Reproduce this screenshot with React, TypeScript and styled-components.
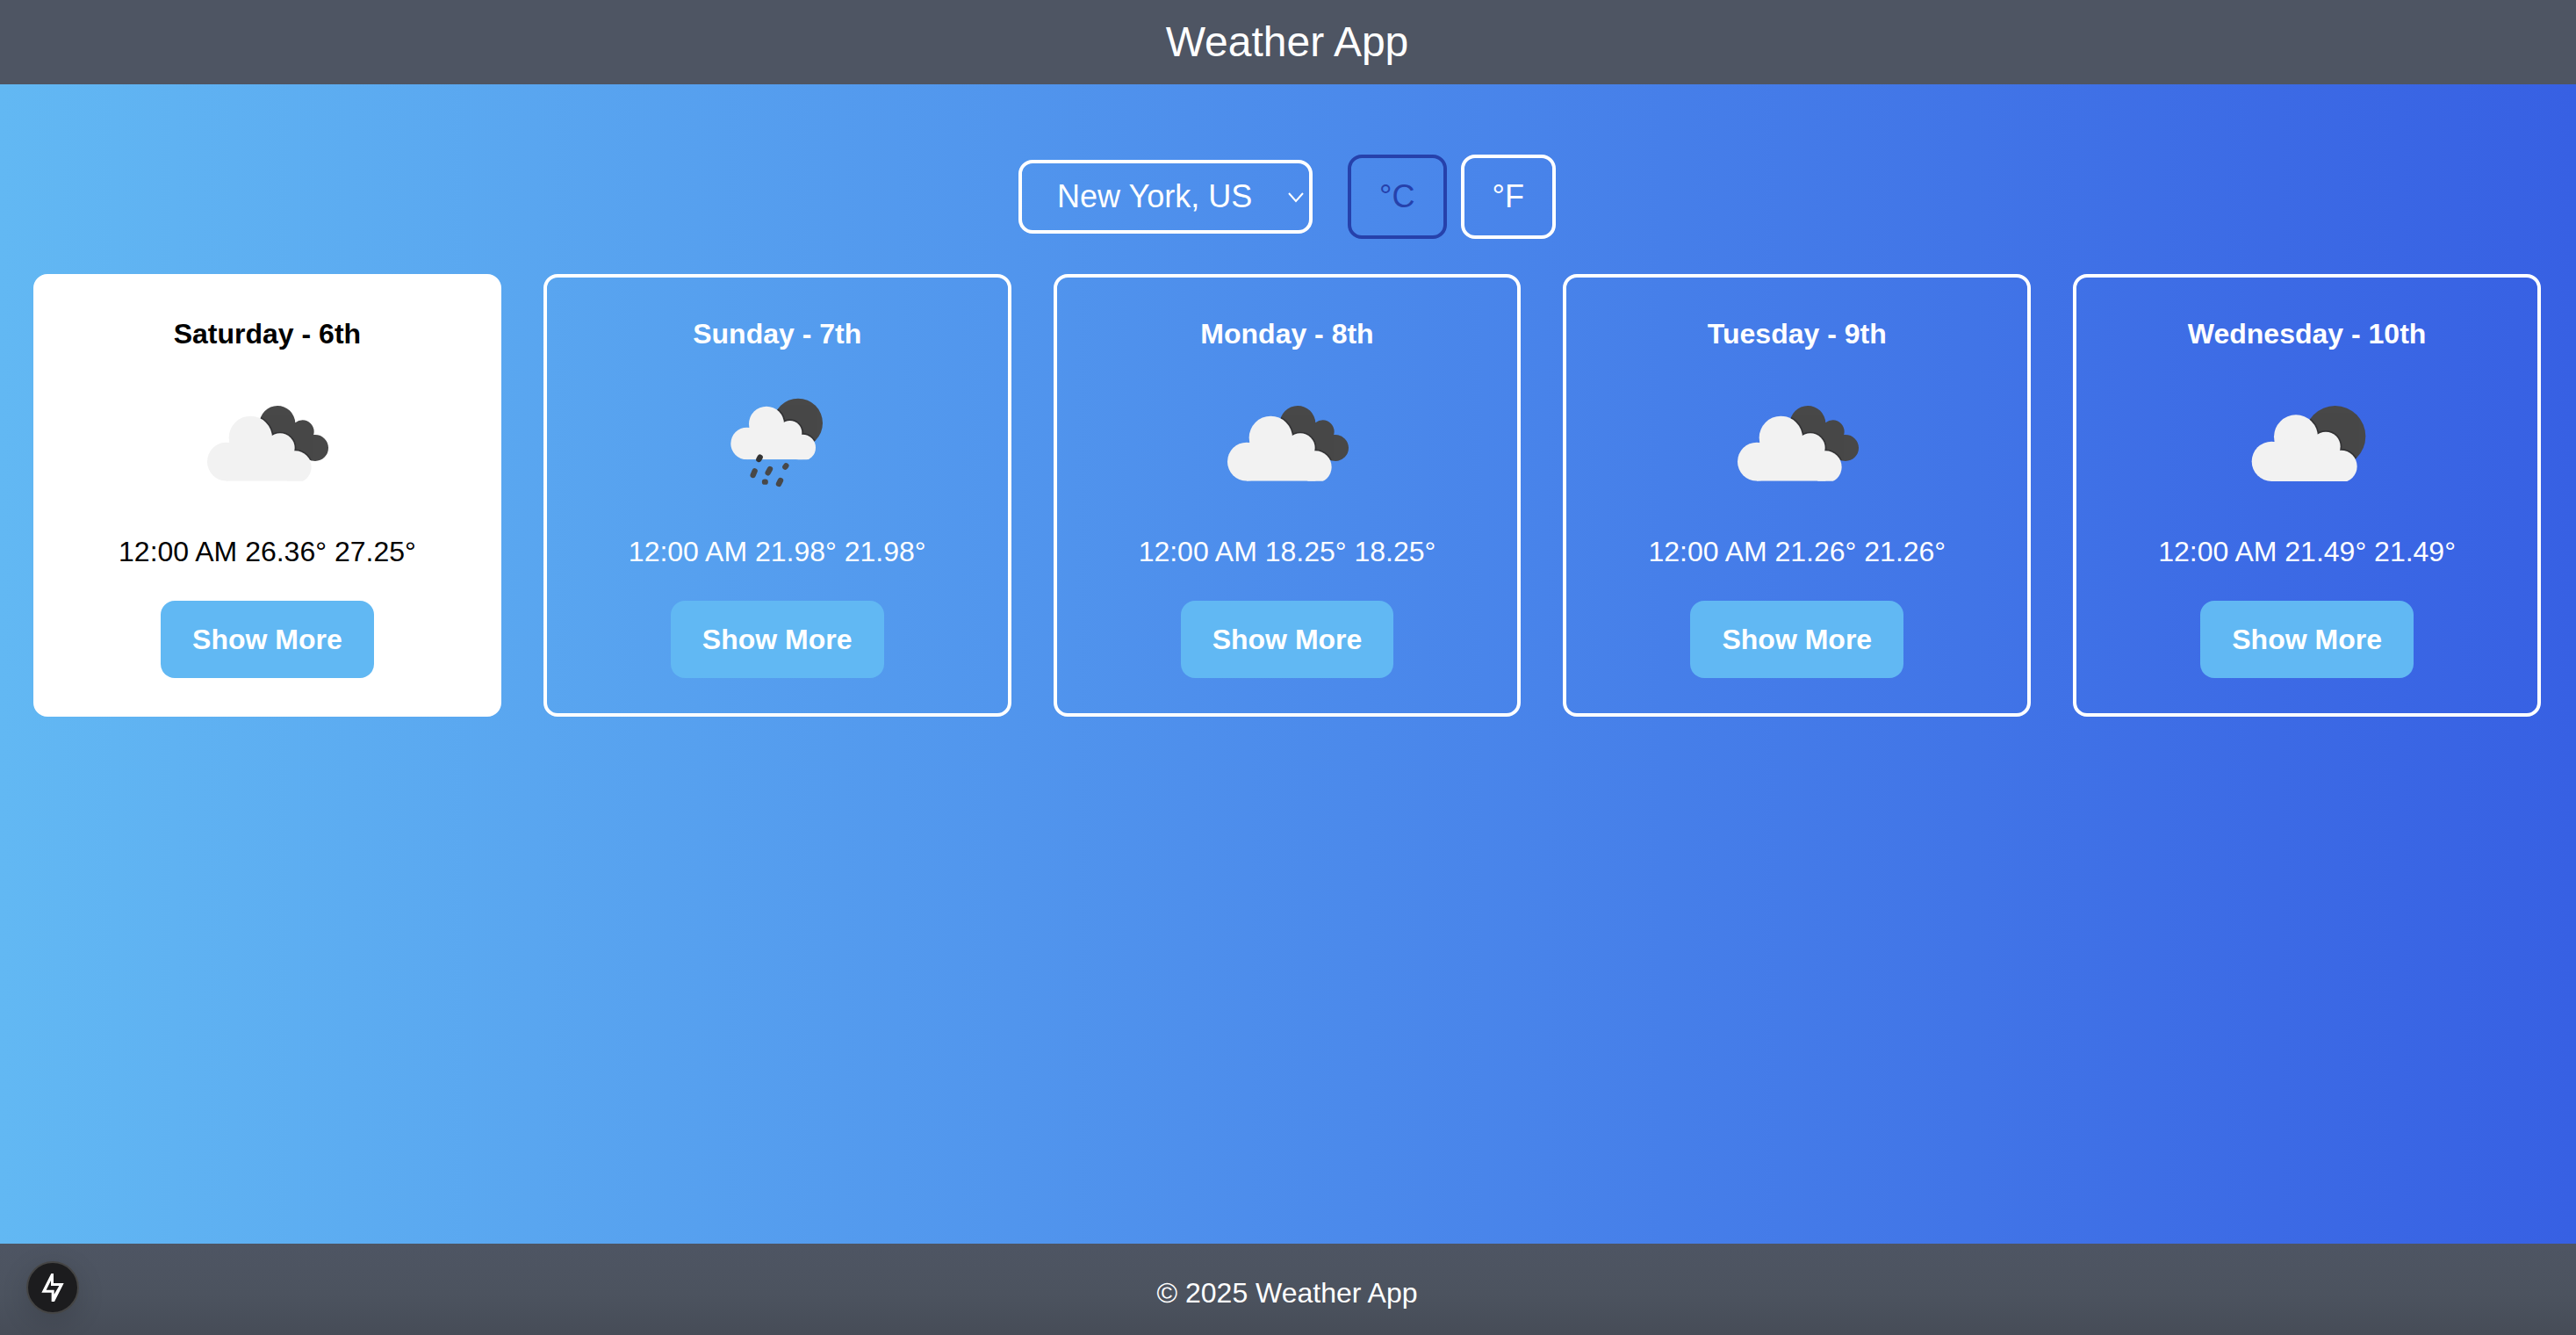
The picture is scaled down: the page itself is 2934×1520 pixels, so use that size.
import React, { useId, useState } from "react";
import styled, { createGlobalStyle } from "styled-components";

const GlobalStyle = createGlobalStyle`
  *, *::before, *::after { box-sizing: border-box; }
  body {
    margin: 0;
    font-family: "Liberation Sans", Arial, Helvetica, sans-serif;
    font-size: 32px;
    line-height: 48px;
    color: #fff;
  }
  button, select { font-family: inherit; }
`;

const Page = styled.div`
  display: flex;
  flex-direction: column;
  min-height: 100vh;
`;

const Header = styled.header`
  padding: 16px 18px 16px 16px;
  background: #4e5563;
  text-align: center;
`;

const Title = styled.h1`
  margin: 0;
  font-size: 48px;
  line-height: 64px;
  font-weight: 400;
`;

const Main = styled.main`
  flex: 1;
  display: flex;
  flex-direction: column;
  gap: 40px;
  padding: 80px 40px 40px 38px;
  background: linear-gradient(to right, #62b8f3, #4b89eb 53%, #3760e3);
`;

const Controls = styled.div`
  display: flex;
  justify-content: center;
  align-items: center;
  gap: 40px;
`;

const SelectWrap = styled.div`
  position: relative;
  display: flex;
`;

const CitySelect = styled.select`
  appearance: none;
  width: 335px;
  height: 84px;
  padding: 0 40px;
  border: 4px solid #fff;
  border-radius: 16px;
  background: transparent;
  color: #fff;
  font-size: 36px;
  line-height: 56px;
  cursor: pointer;

  option { color: #000; }
`;

const Chevron = styled.svg`
  position: absolute;
  right: 8px;
  top: 36px;
  width: 20px;
  height: 14px;
  pointer-events: none;
`;

const Units = styled.div`
  display: flex;
  gap: 16px;
`;

const UnitButton = styled.button<{ $active: boolean }>`
  padding: 16px 32px;
  border: 4px solid ${(p) => (p.$active ? "#2641ab" : "#fff")};
  border-radius: 16px;
  background: transparent;
  color: ${(p) => (p.$active ? "#2641ab" : "#fff")};
  font-size: 36px;
  line-height: 56px;
  cursor: pointer;
`;

const Days = styled.section`
  display: grid;
  grid-template-columns: repeat(5, 1fr);
  gap: 48px;
`;

const Card = styled.article<{ $selected: boolean }>`
  display: flex;
  flex-direction: column;
  align-items: center;
  padding: 40px;
  border: 4px solid #fff;
  border-radius: 16px;
  background: ${(p) => (p.$selected ? "#fff" : "transparent")};
  color: ${(p) => (p.$selected ? "#000" : "#fff")};
`;

const Day = styled.h2`
  margin: 0;
  font-size: 32px;
  line-height: 48px;
  font-weight: 700;
`;

const Icon = styled.svg`
  width: 200px;
  height: 200px;
`;

const Reading = styled.p`
  margin: 0;
`;

const MoreButton = styled.button`
  margin-top: 32px;
  padding: 20px 36px;
  border: 0;
  border-radius: 16px;
  background: #61b8f3;
  color: #fff;
  font-size: 32px;
  line-height: 48px;
  font-weight: 700;
  cursor: pointer;
`;

const Footer = styled.footer`
  padding: 32px 26px 24px 24px;
  background: linear-gradient(#4e5563, #4c535f 55%, #464c57);
  text-align: center;
`;

const DevBadge = styled.button`
  position: fixed;
  left: 30px;
  bottom: 24px;
  width: 60px;
  height: 60px;
  padding: 0;
  border: 2px solid #454545;
  border-radius: 50%;
  background: #1c1c1e;
  box-shadow: 0 8px 32px rgba(0, 0, 0, 0.14);
  cursor: pointer;

  svg { display: block; width: 56px; height: 56px; }
`;

type Sky = "broken" | "rain" | "scattered";
type Lobe = [cx: number, cy: number, r: number];

interface SkyShape {
  label: string;
  back: Lobe[];
  backFill?: string;
  front: Lobe[];
  frontFill: string;
  base: number;
  drops?: string[];
}

const skies: Record<Sky, SkyShape> = {
  broken: {
    label: "Broken clouds",
    back: [[336, 235, 61], [422, 262, 39], [465, 318, 45]],
    backFill: "M336 235L422 262L465 318L440 360L340 300Z",
    front: [[244, 283, 74], [162, 365, 66], [345, 318, 50], [397, 383, 55]],
    frontFill: "M162 365L170 299L244 283L345 318L397 345V431H162Z",
    base: 431,
  },
  scattered: {
    label: "Scattered clouds",
    back: [[395, 278, 104]],
    front: [[261, 280, 75], [178, 364, 68], [363, 313, 50], [415, 381, 55]],
    frontFill: "M178 364L186 297L261 280L363 313L415 345V432H178Z",
    base: 432,
  },
  rain: {
    label: "Rain",
    back: [[372, 233, 84]],
    front: [[264, 236, 60], [197, 303, 55], [344, 266, 41], [387, 317, 45]],
    frontFill: "M197 303L204 249L264 236L344 266L387 290V358H197Z",
    base: 358,
    drops: ["M218 411L224 397", "M269 403L276 390", "M328 383L331 379", "M258 434H260", "M306 441L312 429"],
  },
};

function SkyIcon({ sky }: { sky: Sky }) {
  const id = useId();
  const { label, back, backFill, front, frontFill, base, drops } = skies[sky];
  const lobes = (list: Lobe[]) => list.map(([cx, cy, r]) => <circle key={cx} cx={cx} cy={cy} r={r} />);

  return (
    <Icon viewBox="0 0 600 600" role="img" aria-label={label}>
      <clipPath id={`${id}-back`}>
        {lobes(back)}
        {backFill && <path d={backFill} />}
      </clipPath>
      <clipPath id={`${id}-base`}>
        <rect width="600" height={base} />
      </clipPath>
      <g clipPath={`url(#${id}-back)`}>
        <rect width="600" height="600" fill="#484848" />
        <g fill="none" stroke="#262628" strokeWidth="10" opacity="0.6">{lobes(front)}</g>
      </g>
      <g fill="#f2f2f2" clipPath={`url(#${id}-base)`}>
        {lobes(front)}
        <path d={frontFill} />
      </g>
      {drops && (
        <g stroke="#484848" strokeWidth="19" strokeLinecap="round">
          <path d="M238 357L242 350" stroke="#333" />
          {drops.map((d) => <path key={d} d={d} />)}
        </g>
      )}
    </Icon>
  );
}

const forecast: { day: string; sky: Sky; reading: string }[] = [
  { day: "Saturday - 6th", sky: "broken", reading: "12:00 AM 26.36° 27.25°" },
  { day: "Sunday - 7th", sky: "rain", reading: "12:00 AM 21.98° 21.98°" },
  { day: "Monday - 8th", sky: "broken", reading: "12:00 AM 18.25° 18.25°" },
  { day: "Tuesday - 9th", sky: "broken", reading: "12:00 AM 21.26° 21.26°" },
  { day: "Wednesday - 10th", sky: "scattered", reading: "12:00 AM 21.49° 21.49°" },
];

export default function App() {
  const [unit, setUnit] = useState("C");

  return (
    <Page>
      <GlobalStyle />
      <Header>
        <Title>Weather App</Title>
      </Header>
      <Main>
        <Controls>
          <SelectWrap>
            <CitySelect aria-label="City" defaultValue="ny">
              <option value="ny">New York, US</option>
            </CitySelect>
            <Chevron viewBox="0 0 20 14" fill="none" stroke="#fff" strokeWidth="2" aria-hidden="true">
              <path d="M1 2L9 11L17 2" />
            </Chevron>
          </SelectWrap>
          <Units>
            {["C", "F"].map((u) => (
              <UnitButton key={u} $active={unit === u} aria-pressed={unit === u} onClick={() => setUnit(u)}>
                {`°${u}`}
              </UnitButton>
            ))}
          </Units>
        </Controls>
        <Days>
          {forecast.map(({ day, sky, reading }, i) => (
            <Card key={day} $selected={i === 0}>
              <Day>{day}</Day>
              <SkyIcon sky={sky} />
              <Reading>{reading}</Reading>
              <MoreButton>Show More</MoreButton>
            </Card>
          ))}
        </Days>
      </Main>
      <Footer>© 2025 Weather App</Footer>
      <DevBadge aria-label="Open developer tools">
        <svg viewBox="0 0 168 168" fill="#fff" fillRule="evenodd" aria-hidden="true">
          <path d="M79 36H87V69H122L90 132H80V101H46ZM78 60L62 92H89V107L106 78H78Z" />
        </svg>
      </DevBadge>
    </Page>
  );
}
